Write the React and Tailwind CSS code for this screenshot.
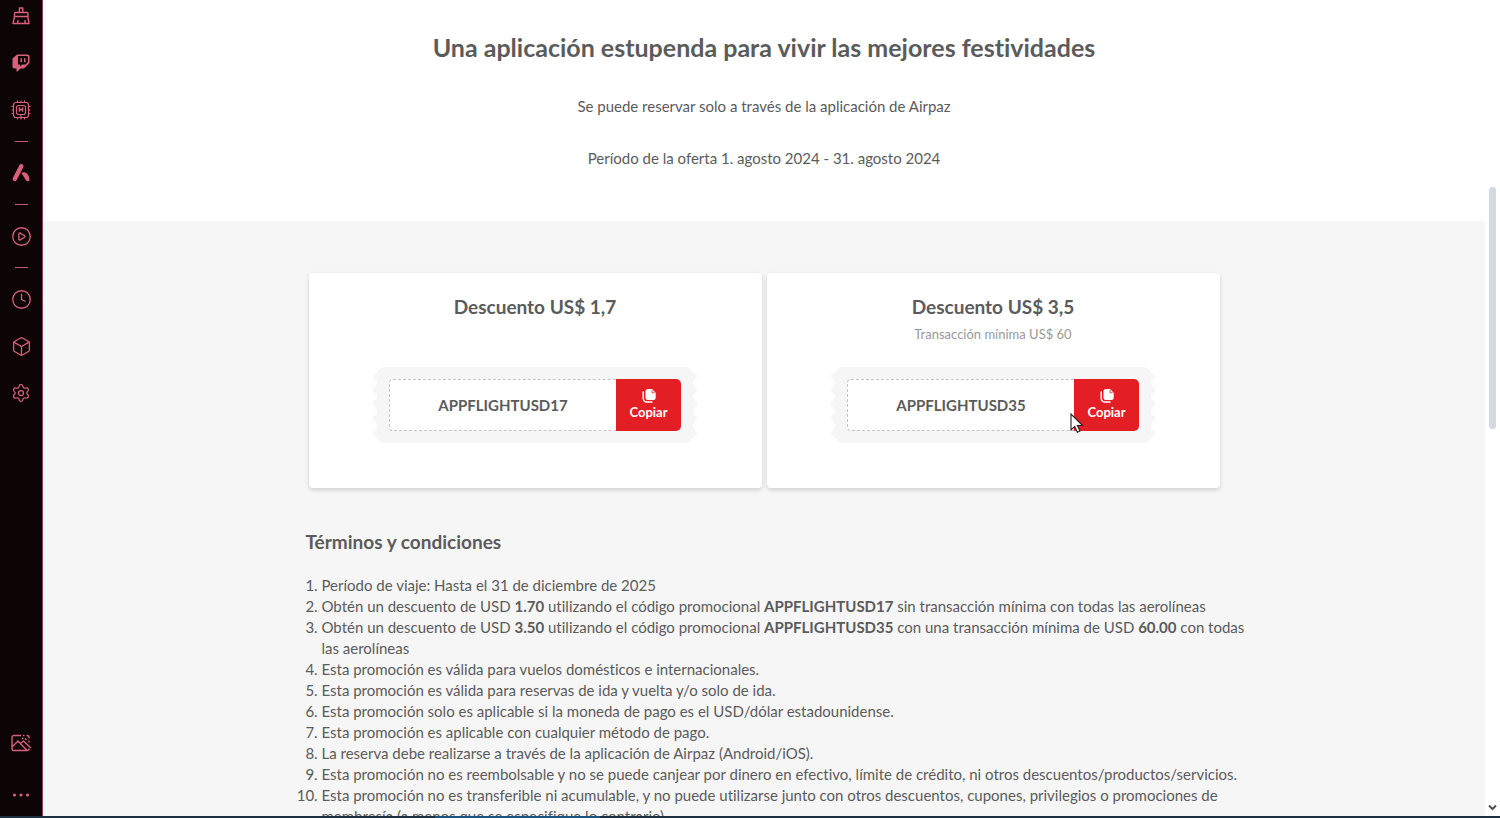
import { Clock, Box, Settings, CirclePlay } from "lucide-react";

const terms = [
  <>Período de viaje: Hasta el 31 de diciembre de 2025</>,
  <>Obtén un descuento de USD <b>1.70</b> utilizando el código promocional <b>APPFLIGHTUSD17</b> sin transacción mínima con todas las aerolíneas</>,
  <>Obtén un descuento de USD <b>3.50</b> utilizando el código promocional <b>APPFLIGHTUSD35</b> con una transacción mínima de USD <b>60.00</b> con todas las aerolíneas</>,
  <>Esta promoción es válida para vuelos domésticos e internacionales.</>,
  <>Esta promoción es válida para reservas de ida y vuelta y/o solo de ida.</>,
  <>Esta promoción solo es aplicable si la moneda de pago es el USD/dólar estadounidense.</>,
  <>Esta promoción es aplicable con cualquier método de pago.</>,
  <>La reserva debe realizarse a través de la aplicación de Airpaz (Android/iOS).</>,
  <>Esta promoción no es reembolsable y no se puede canjear por dinero en efectivo, límite de crédito, ni otros descuentos/productos/servicios.</>,
  <>Esta promoción no es transferible ni acumulable, y no puede utilizarse junto con otros descuentos, cupones, privilegios o promociones de membresía (a menos que se especifique lo contrario).</>,
];

function Cleaner() {
  return (
    <svg width="20" height="20" viewBox="0 0 20 20" fill="none" stroke="currentColor" strokeWidth="1.4" strokeLinejoin="round">
      <path d="M8.400 6.500V2h3.400v4.500M4.500 6.500h11.500a1 1 0 0 1 1 1v3H3.500v-3a1 1 0 0 1 1-1zM3.500 10.500 2 17.500h16l-1.200-7M6.500 17.500l.6-3.500M14 17.500V14" />
    </svg>
  );
}

function Twitch() {
  return (
    <svg width="20" height="20" viewBox="0 0 20 20" fill="currentColor">
      <path d="M6 1.500h10.500a2 2 0 0 1 2 2V10l-5.500 5.500H9.500L6.500 18.500H5.500v-3H3.500a2 2 0 0 1-2-2V5.500zM7 3v8.500h2v2l2-2h3.500l2.500-2.500V4a1 1 0 0 0-1-1z" fillRule="evenodd" />
      <path d="M9.500 5.300h1.500v4H9.500zM13 5.300h1.500v4H13z" />
    </svg>
  );
}

function Chip() {
  return (
    <svg width="20" height="20" viewBox="0 0 20 20" fill="none" stroke="currentColor" strokeWidth="1.2">
      <rect x="2.500" y="2.500" width="15" height="15" rx="2.500" />
      <rect x="5.500" y="5.500" width="9" height="9" rx="2" />
      <path d="M8.300 11.800V8.200l1.700 2 1.700-2v3.600M6.500 2.500V.5M10 2.500V.5M13.500 2.500V.5M6.500 19.500v-2M10 19.500v-5M13.500 19.500v-2M.5 6.500h2M.5 10h2M.5 13.500h2M17.500 6.500h2M17.500 10h2M17.500 13.500h2" />
    </svg>
  );
}

function Aria() {
  return (
    <svg width="20" height="20" viewBox="0 0 20 20" fill="none" stroke="currentColor" strokeWidth="4.4" strokeLinecap="round">
      <path d="M10.300 3.200 3.800 16" />
      <path d="M10.200 9.800c3.600-1.500 7-.2 8.300 6.200.3 2.200-2 3-3.400 1.500z" fill="currentColor" stroke="none" />
    </svg>
  );
}

function Wallpaper() {
  return (
    <svg width="22" height="20" viewBox="0 0 22 20" fill="none" stroke="currentColor" strokeWidth="1.400" strokeLinejoin="round">
      <path d="M11 2.500H4a2 2 0 0 0-2 2V15.500a2 2 0 0 0 2 2h13a2 2 0 0 0 2-2M13 2.500h1.500M16.500 2.500h.5a2 2 0 0 1 2 2v1M19 7.500v2M2 14l6-6 9 9.500M10.500 10.500l3-2.500 7.500 7M12 5.500h1.500M15 5.500l1.500 1.500" />
    </svg>
  );
}

function CopyIcon() {
  return (
    <svg width="14" height="14" viewBox="0 0 14 14">
      <path d="M6 0H10l3.700 3.700V8.500A2.500 2.500 0 0 1 11.200 11H6a2.500 2.500 0 0 1-2.500-2.500v-6A2.500 2.500 0 0 1 6 0z" fill="white" />
      <path d="M10 1v2.800h2.800" fill="none" stroke="#e31e24" strokeWidth=".8" />
      <path d="M1.200 3v6.300A3.700 3.700 0 0 0 4.900 13H10" fill="none" stroke="white" strokeWidth="1.500" strokeLinecap="round" />
    </svg>
  );
}

function TicketEdge({ className = "" }) {
  return (
    <svg width="12" height="76" viewBox="0 0 12 76" className={className} fill="#f6f6f6">
      <path d="M12 0H10Q7 1 5 4Q3 7 0 7.500V10C1 12 4 13 4 16S1 20 0 22V24C1 26 4 26 4 29.500S1 33 0 35V38C1 40 4 41 4 44.500S1 48 0 50V52C1 54 4 55 4 58.500S1 63 0 65V68Q3 69 5 72Q7 75 10 76H12z" />
    </svg>
  );
}

function Coupon({ title, note, code, children }) {
  return (
    <section className="flex h-[215px] min-w-0 flex-1 flex-col items-center rounded bg-white pt-5 shadow-[0_2px_4px_rgba(0,0,0,0.16)]">
      <h2 className="text-[19px] leading-[27px] font-bold">{title}</h2>
      <p className="mt-1 h-5 text-[13px] leading-5 text-[#999]">{note}</p>
      <div className="mt-[23px] flex">
        <TicketEdge />
        <div className="flex h-[76px] items-center bg-[#f6f6f6] px-1">
          <div className="flex h-[52px] w-[227px] items-center justify-center rounded-l border border-r-0 border-dashed border-[#c4c4c4] bg-white text-[15px] font-bold">{code}</div>
          <div className="relative">
            <button type="button" className="flex h-[52px] w-[65px] flex-col items-center justify-center rounded-r-[5px] bg-[#e31e24] pb-px text-[13px] leading-[18px] font-bold text-white">
              <CopyIcon />
              Copiar
            </button>
            {children}
          </div>
        </div>
        <TicketEdge className="-scale-x-100" />
      </div>
    </section>
  );
}

function SideButton({ label, children }) {
  return <button type="button" aria-label={label} className="flex h-[22px] w-full items-center justify-center">{children}</button>;
}

function Dash() {
  return <hr className="w-[13px] border-[#c95a70]" />;
}

export default function App() {
  return (
    <div className="flex h-screen flex-col overflow-hidden bg-white font-['Lato',sans-serif] text-[#5b5b5b] [font-variant-ligatures:none]">
      <div className="flex min-h-0 flex-1">
        <nav aria-label="Barra lateral" className="flex w-[43px] shrink-0 flex-col items-center border-r border-[#8f3f50] bg-[#0d0406] pt-[5px] pb-[10px] text-[#d9607a]">
          <SideButton label="Limpiador"><Cleaner /></SideButton>
          <div className="h-[25px]" />
          <SideButton label="Twitch"><Twitch /></SideButton>
          <div className="h-[25px]" />
          <SideButton label="Control"><Chip /></SideButton>
          <div className="flex h-[41px] items-center"><Dash /></div>
          <SideButton label="Aria"><Aria /></SideButton>
          <div className="flex h-[41px] items-center"><Dash /></div>
          <SideButton label="Reproductor"><CirclePlay size={21} strokeWidth={1.5} /></SideButton>
          <div className="flex h-[41px] items-center"><Dash /></div>
          <SideButton label="Historial"><Clock size={21} strokeWidth={1.5} /></SideButton>
          <div className="h-[25px]" />
          <SideButton label="Extensiones"><Box size={21} strokeWidth={1.5} /></SideButton>
          <div className="h-[25px]" />
          <SideButton label="Ajustes"><Settings size={20} strokeWidth={1.5} /></SideButton>
          <div className="mt-auto mb-[30px] w-full"><SideButton label="Fondo"><Wallpaper /></SideButton></div>
          <SideButton label="Más">
            <svg width="18" height="4" viewBox="0 0 18 4" fill="currentColor"><circle cx="2.500" cy="2" r="1.600" /><circle cx="9" cy="2" r="1.600" /><circle cx="15.500" cy="2" r="1.600" /></svg>
          </SideButton>
        </nav>

        <main className="min-w-0 flex-1 overflow-hidden">
          <header className="flex h-[221px] flex-col items-center bg-white pt-[31px] text-center">
            <h1 className="text-[25px] leading-8 font-bold">Una aplicación estupenda para vivir las mejores festividades</h1>
            <p className="mt-[33px] text-[15px] leading-[21px]">Se puede reservar solo a través de la aplicación de Airpaz</p>
            <p className="mt-[31px] text-[15px] leading-[21px]">Período de la oferta 1. agosto 2024 - 31. agosto 2024</p>
          </header>
          <div className="bg-[#f6f6f6] pt-[52px]">
            <div className="mx-auto max-w-[917px]">
              <div className="flex gap-[5px] px-[3px]">
                <Coupon title="Descuento US$ 1,7" code="APPFLIGHTUSD17" />
                <Coupon title="Descuento US$ 3,5" note="Transacción mínima US$ 60" code="APPFLIGHTUSD35">
                  <svg className="absolute top-[34px] -left-1 z-10" width="14" height="20" viewBox="0 0 14 20">
                    <path d="M1 1v16l3.700-3.500 2.600 5.700 2.700-1.200-2.600-5.500h5.200z" fill="white" stroke="#222" strokeWidth="1.100" />
                  </svg>
                </Coupon>
              </div>
              <h2 className="mt-10 text-[19px] leading-7 font-bold">Términos y condiciones</h2>
              <ol className="mt-[19px] -mr-8 list-decimal pl-4 text-[15px] leading-[21px]">
                {terms.map((term, i) => <li key={i}>{term}</li>)}
              </ol>
            </div>
          </div>
        </main>

        <div className="flex w-[15px] shrink-0 flex-col items-center bg-white pt-[187px] pb-[5px]">
          <div className="h-[242px] w-[7px] rounded-full bg-[#d0dae0]" />
          <svg className="mt-auto" width="9" height="7" viewBox="0 0 9 7" fill="none" stroke="#505050" strokeWidth="2"><path d="m1 1.500 3.500 3.500L8 1.500" /></svg>
        </div>
      </div>
      <footer className="flex h-[2px] shrink-0 bg-[#1d3042]">
        <div className="ml-[29%] w-[11%] bg-[#1c5480]" />
      </footer>
    </div>
  );
}
